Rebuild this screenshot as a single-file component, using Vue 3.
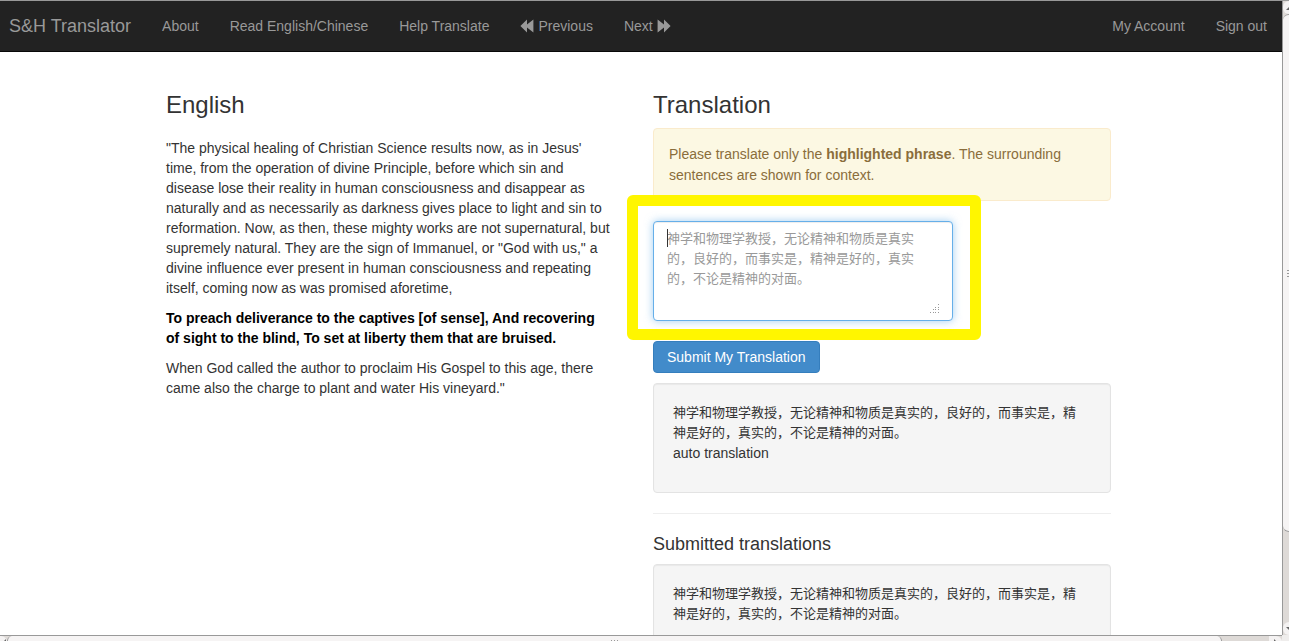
<script setup>
import { ref } from 'vue'

const suggestion =
  '神学和物理学教授，无论精神和物质是真实的，良好的，而事实是，精神是好的，真实的，不论是精神的对面。'
const draft = ref('')
</script>

<template>
  <div class="window">
    <div class="pane">
      <nav class="navbar">
        <a class="brand" href="#">S&amp;H Translator</a>
        <a href="#">About</a>
        <a href="#">Read English/Chinese</a>
        <a href="#">Help Translate</a>
        <a href="#">
          <svg class="glyph" viewBox="0 0 14 14" aria-hidden="true">
            <path d="M0.4 7 7 0.6v5L13.4 0.6v12.8L7 8.4v5z" />
          </svg>
          Previous
        </a>
        <a href="#">
          Next
          <svg class="glyph" viewBox="0 0 14 14" aria-hidden="true">
            <path d="M13.6 7 7 0.6v5L0.6 0.6v12.8L7 8.4v5z" />
          </svg>
        </a>
        <span class="spacer"></span>
        <a href="#">My Account</a>
        <a href="#">Sign out</a>
      </nav>

      <main class="columns">
        <section class="source">
          <h3>English</h3>
          <p>
            "The physical healing of Christian Science results now, as in Jesus'<br />
            time, from the operation of divine Principle, before which sin and<br />
            disease lose their reality in human consciousness and disappear as<br />
            naturally and as necessarily as darkness gives place to light and sin to<br />
            reformation. Now, as then, these mighty works are not supernatural, but<br />
            supremely natural. They are the sign of Immanuel, or "God with us," a<br />
            divine influence ever present in human consciousness and repeating<br />
            itself, coming now as was promised aforetime,
          </p>
          <p class="phrase">
            To preach deliverance to the captives [of sense], And recovering<br />
            of sight to the blind, To set at liberty them that are bruised.
          </p>
          <p>
            When God called the author to proclaim His Gospel to this age, there<br />
            came also the charge to plant and water His vineyard."
          </p>
        </section>

        <section class="target">
          <h3 id="translation-title">Translation</h3>
          <div class="alert">
            Please translate only the <strong>highlighted phrase</strong>. The surrounding sentences
            are shown for context.
          </div>
          <form @submit.prevent>
            <div class="entry">
              <textarea
                v-model="draft"
                :placeholder="suggestion"
                aria-labelledby="translation-title"
              ></textarea>
              <span v-if="!draft" class="caret"></span>
              <svg class="grip" viewBox="0 0 10 10" aria-hidden="true">
                <path
                  d="M8 0h1v1h-1zM8 3h1v1h-1zM5 3h1v1h-1zM8 5h1v1h-1zM5 5h1v1h-1zM3 5h1v1h-1zM8 8h1v1h-1zM5 8h1v1h-1zM3 8h1v1h-1zM0 8h1v1h-1z"
                />
              </svg>
            </div>
            <button class="submit" type="submit">Submit My Translation</button>
          </form>
          <div class="well">
            <p class="zh">{{ suggestion }}</p>
            <p>auto translation</p>
          </div>
          <hr />
          <h4>Submitted translations</h4>
          <div class="well">
            <p class="zh">{{ suggestion }}</p>
          </div>
        </section>
      </main>
    </div>

    <div class="bar vertical" aria-hidden="true">
      <div class="stepper">
        <svg viewBox="0 0 8 8"><path d="M0 6 4 2 8 6z" /></svg>
      </div>
      <div class="thumb"><i></i><i></i><i></i></div>
      <div class="track"></div>
      <div class="stepper">
        <svg viewBox="0 0 8 8"><path d="M0 2h8L4 6z" /></svg>
      </div>
    </div>
    <div class="bar horizontal" aria-hidden="true">
      <div class="stepper first">
        <svg viewBox="0 0 8 8"><path d="M6 0v8L2 4z" /></svg>
      </div>
      <div class="thumb"><i></i><i></i><i></i></div>
      <div class="track"></div>
      <div class="stepper">
        <svg viewBox="0 0 8 8"><path d="M2 0v8l4-4z" /></svg>
      </div>
    </div>
  </div>
</template>

<style>
body {
  background: #fff;
  overflow: hidden;
}
</style>

<style scoped>
.window,
.window * {
  box-sizing: border-box;
}
.window {
  display: grid;
  grid-template-columns: minmax(0, 1fr) 7px;
  grid-template-rows: minmax(0, 1fr) 6px;
  height: 100vh;
  border-top: 1px solid #999;
  background: #efedec;
  color: #333;
  font: 14px/20px "Liberation Sans", "Noto Sans CJK SC", sans-serif;
}
.pane {
  overflow: hidden;
  background: #fff;
}
.navbar {
  display: flex;
  align-items: center;
  gap: 1px;
  height: 51px;
  padding-left: 9px;
  background: #222;
  border-bottom: 1px solid #080808;
}
.navbar a {
  display: flex;
  align-items: center;
  gap: 4px;
  padding: 15px;
  color: #999;
  text-decoration: none;
  white-space: nowrap;
}
.navbar .brand {
  padding-left: 0;
  font-size: 18px;
}
.spacer {
  flex: 1;
}
.glyph {
  width: 14px;
  height: 14px;
  fill: #999;
}
.columns {
  display: grid;
  grid-template-columns: minmax(0, 1fr) minmax(0, 1fr);
  gap: 29px;
  padding: 40px 171px 20px 166px;
}
h3 {
  margin: 0 0 10px;
  font-size: 24px;
  line-height: 26px;
  font-weight: 400;
}
.source h3 {
  margin-bottom: 20px;
}
h4 {
  margin: 0 0 10px;
  font-size: 18px;
  line-height: 20px;
  font-weight: 400;
}
p {
  margin: 0 0 10px;
}
.phrase {
  color: #000;
  font-weight: 700;
}
.alert {
  margin-bottom: 20px;
  padding: 15px 15px 14px;
  border: 1px solid #faebcc;
  border-radius: 4px;
  background: #fcf8e3;
  color: #8a6d3b;
  line-height: 21px;
}
.entry {
  position: relative;
  width: 300px;
  max-width: 100%;
  margin-bottom: 20px;
}
.entry::before {
  content: "";
  position: absolute;
  inset: -26px -28px -19px -26px;
  border: 11px solid #fff600;
  border-radius: 6px;
  background: #fff;
}
textarea {
  position: relative;
  display: block;
  width: 100%;
  height: 100px;
  padding: 7px 20px 6px 13px;
  border: 1px solid #66afe9;
  border-radius: 4px;
  outline: 0;
  background: #fff;
  box-shadow: inset 0 1px 1px rgba(0, 0, 0, 0.075), 0 0 8px rgba(102, 175, 233, 0.6);
  color: #555;
  font: 13px/20px "Liberation Sans", "Noto Sans CJK SC", sans-serif;
  resize: none;
}
textarea::placeholder {
  color: #999;
  opacity: 1;
}
.caret {
  position: absolute;
  top: 8px;
  left: 14px;
  width: 1px;
  height: 18px;
  background: #333;
}
.grip {
  position: absolute;
  right: 13px;
  bottom: 7px;
  width: 10px;
  height: 10px;
  fill: #999;
}
.submit {
  display: block;
  height: 32px;
  margin-bottom: 10px;
  padding: 0 13px;
  border: 1px solid #357ebd;
  border-radius: 4px;
  background: #428bca;
  color: #fff;
  font: inherit;
}
.well {
  margin-bottom: 20px;
  padding: 19px 25px 19px 19px;
  border: 1px solid #e3e3e3;
  border-radius: 4px;
  background: #f5f5f5;
  box-shadow: inset 0 1px 1px rgba(0, 0, 0, 0.05);
}
.zh {
  margin: 0;
  font-size: 13px;
}
hr {
  margin: 0 0 20px;
  border: 0;
  border-top: 1px solid #eee;
}
.bar {
  display: flex;
  overflow: hidden;
  background: #dedad7;
}
.vertical {
  flex-direction: column;
  border-left: 1px solid #999;
}
.horizontal {
  border-top: 1px solid #999;
}
.stepper {
  flex: none;
  overflow: hidden;
  background: #f4f2f2;
}
.stepper svg {
  display: block;
  width: 8px;
  height: 8px;
  fill: #666;
}
.vertical .stepper {
  width: 14px;
  height: 13px;
  padding: 3px;
  border-radius: 6px 0 0 6px;
}
.horizontal .stepper {
  width: 13px;
  height: 14px;
  padding: 3px;
  border-radius: 0 6px 0 0;
}
.horizontal .first {
  width: 7px;
  padding-left: 0;
}
.thumb {
  display: flex;
  align-items: center;
  justify-content: center;
  gap: 2px;
  background: #f6f4f4;
}
.thumb i {
  background: #999;
}
.vertical .thumb {
  flex: 518;
  flex-direction: column;
  align-items: flex-end;
  border: 1px solid #999;
  border-width: 1px 0;
  border-radius: 6px 0 0 6px;
}
.vertical i {
  width: 2px;
  height: 1px;
}
.vertical .track {
  flex: 90;
}
.horizontal .thumb {
  flex: 1215;
  align-items: flex-end;
  border: 1px solid #999;
  border-width: 0 1px;
  border-radius: 6px 6px 0 0;
}
.horizontal i {
  width: 1px;
  height: 1px;
}
.horizontal .track {
  flex: 47;
}
</style>
